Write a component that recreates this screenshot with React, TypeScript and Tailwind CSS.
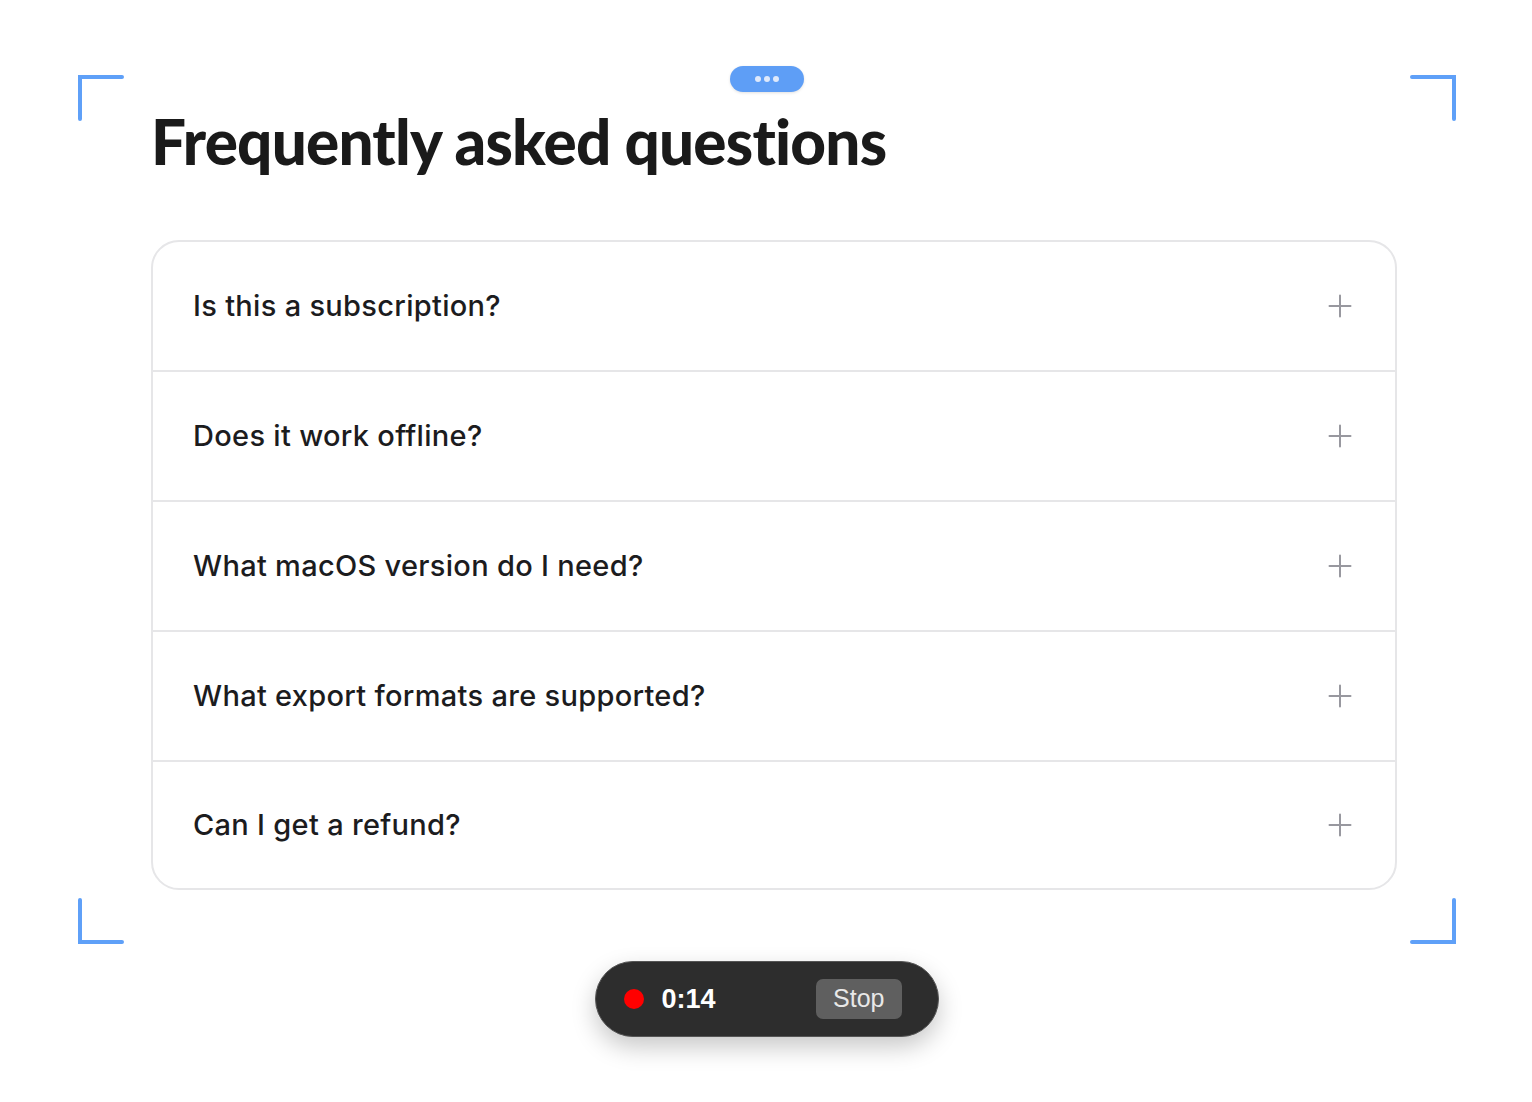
import React from 'react';

const questions = [
  'Is this a subscription?',
  'Does it work offline?',
  'What macOS version do I need?',
  'What export formats are supported?',
  'Can I get a refund?',
];

function PlusIcon() {
  return (
    <svg width="24" height="24" viewBox="0 0 24 24" fill="none" stroke="#98989f" strokeWidth="2" strokeLinecap="round">
      <path d="M12 1.5v21M1.5 12h21" />
    </svg>
  );
}

function Corner({ className, d }: { className: string; d: string }) {
  return (
    <svg className={`absolute ${className}`} width="46" height="46" viewBox="0 0 46 46" fill="none" stroke="#5fa0f8" strokeWidth="4" strokeLinecap="round">
      <path d={d} />
    </svg>
  );
}

export default function App() {
  return (
    <div className="h-[1102px] w-full overflow-hidden bg-white pt-[75px]" style={{ fontFamily: 'Lato, "Noto Sans", sans-serif' }}>
      <div className="relative ml-[78px] h-[869px] w-[1378px]">
        <Corner className="left-0 top-0" d="M2 44V2h42" />
        <Corner className="right-0 top-0" d="M2 2h42v42" />
        <Corner className="left-0 bottom-0" d="M2 2v42h42" />
        <Corner className="right-0 bottom-0" d="M44 2v42H2" />

        <div className="absolute left-[652px] -top-[9px] flex h-[26px] w-[74px] items-center justify-center gap-[3px] rounded-full bg-[#5e9ef6] shadow-[0_1px_3px_rgba(0,0,0,0.12)]">
          <span className="h-[6px] w-[6px] rounded-full bg-[#dfe9fb]" />
          <span className="h-[6px] w-[6px] rounded-full bg-[#dfe9fb]" />
          <span className="h-[6px] w-[6px] rounded-full bg-[#dfe9fb]" />
        </div>

        <div className="ml-[73px] w-[1246px] pt-[31px]">
          <h1 className="text-[62px] font-black leading-[70px] tracking-[-0.8px] text-[#1a1a1a]">
            Frequently asked questions
          </h1>

          <div className="mt-[64px] overflow-hidden rounded-[28px] border-2 border-[#e6e6e8] bg-white">
            {questions.map((q, i) => (
              <div
                key={q}
                className={`flex items-center justify-between pl-[40px] pr-[43px] ${
                  i === 0 ? 'h-[128px]' : i === questions.length - 1 ? 'h-[128px] border-t-2 border-[#e6e6e8]' : 'h-[130px] border-t-2 border-[#e6e6e8]'
                }`}
              >
                <span className="text-[29px] font-medium tracking-[0.3px] text-[#1c1c1e]" style={{ fontFamily: 'Inter, "Noto Sans", sans-serif' }}>
                  {q}
                </span>
                <PlusIcon />
              </div>
            ))}
          </div>
        </div>
      </div>

      <div className="mt-[17px] flex justify-center">
        <div className="ml-[1px] flex h-[76px] w-[344px] items-center rounded-full border border-[#555] bg-[#2d2d2d] pl-[28px] pr-[36px] shadow-[0_10px_24px_rgba(0,0,0,0.22)]">
          <span className="h-[20px] w-[20px] rounded-full bg-[#ff0000]" />
          <span className="ml-[18px] text-[27px] font-bold text-white" style={{ fontFamily: '"Liberation Sans", Arial, sans-serif' }}>
            0:14
          </span>
          <button
            className="ml-auto h-[40px] rounded-[7px] bg-[#5f5f5f] px-[17px] text-[25px] text-[#e8e8e8]"
            style={{ fontFamily: '"Liberation Sans", Arial, sans-serif' }}
          >
            Stop
          </button>
        </div>
      </div>
    </div>
  );
}
